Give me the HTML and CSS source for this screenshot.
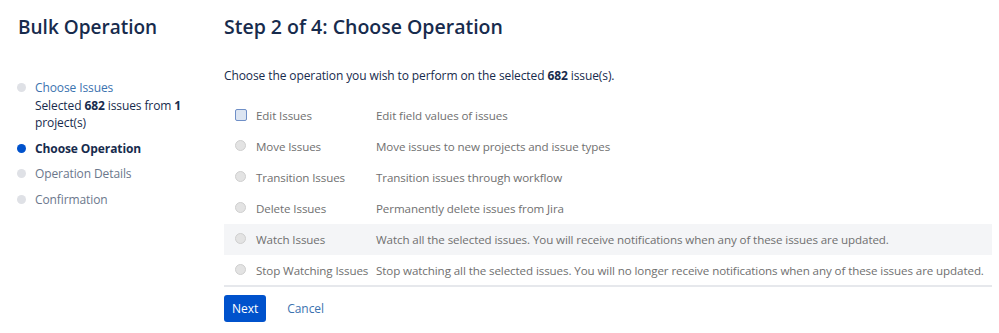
FILE: index.html
```html
<!DOCTYPE html>
<html lang="en">
<head>
    <meta charset="UTF-8">
    <title>Bulk Operation</title>
    <link rel="stylesheet" href="styles.css">
</head>
<body>

<div class="page">
    <div class="sidebar">
        <h1>Bulk Operation</h1>
        <ul class="steps">
            <li class="done">
                <span class="dot"></span>
                <div>
                    <a href="#">Choose Issues</a>
                    <div class="note">Selected <b>682</b> issues from <b>1</b> project(s)</div>
                </div>
            </li>
            <li class="current"><span class="dot"></span><div>Choose Operation</div></li>
            <li><span class="dot"></span><div>Operation Details</div></li>
            <li><span class="dot"></span><div>Confirmation</div></li>
        </ul>
    </div>

    <div class="main">
        <h2>Step 2 of 4: Choose Operation</h2>
        <p class="intro">Choose the operation you wish to perform on the selected <b>682</b> issue(s).</p>

        <table class="ops">
            <tr>
                <td class="radio"><span class="check"></span></td>
                <td class="label">Edit Issues</td>
                <td>Edit field values of issues</td>
            </tr>
            <tr>
                <td class="radio"><span class="circle"></span></td>
                <td class="label">Move Issues</td>
                <td>Move issues to new projects and issue types</td>
            </tr>
            <tr>
                <td class="radio"><span class="circle"></span></td>
                <td class="label">Transition Issues</td>
                <td>Transition issues through workflow</td>
            </tr>
            <tr>
                <td class="radio"><span class="circle"></span></td>
                <td class="label">Delete Issues</td>
                <td>Permanently delete issues from Jira</td>
            </tr>
            <tr class="hover">
                <td class="radio"><span class="circle"></span></td>
                <td class="label">Watch Issues</td>
                <td>Watch all the selected issues. You will receive notifications when any of these issues are updated.</td>
            </tr>
            <tr class="last">
                <td class="radio"><span class="circle"></span></td>
                <td class="label">Stop Watching Issues</td>
                <td>Stop watching all the selected issues. You will no longer receive notifications when any of these issues are updated.</td>
            </tr>
        </table>

        <div class="buttons">
            <button class="btn">Next</button>
            <a href="#" class="cancel">Cancel</a>
        </div>
    </div>
</div>

</body>
</html>
```

FILE: styles.css
```css
body {
    font-family: 'Open Sans', sans-serif;
    font-size: 12px;
    letter-spacing: -0.1px;
    margin: 0;
    color: #172b4d;
    background: #fff;
}

.page {
    display: flex;
}

.sidebar {
    width: 206px;
    flex-shrink: 0;
    padding-left: 18px;
}

h1, h2 {
    font-size: 19px;
    font-weight: 600;
    letter-spacing: 0;
    margin: 13px 0 0;
    line-height: 28px;
    color: #172b4d;
}
h2 {
    font-size: 19.5px;
}

.steps {
    list-style: none;
    margin: 38px 0 0;
    padding: 0;
}
.steps li {
    display: flex;
    line-height: 17.5px;
    margin-bottom: 8px;
    color: #6b778c;
}
.steps .dot {
    width: 9px;
    height: 9px;
    border-radius: 50%;
    background: #dfe1e6;
    margin: 4px 9px 0 -1px;
    flex-shrink: 0;
}
.steps a {
    color: #3b73af;
    text-decoration: none;
}
.steps .note {
    color: #172b4d;
    width: 150px;
}
.steps .current {
    color: #172b4d;
    font-weight: bold;
}
.steps .current .dot {
    background: #0052cc;
}

.main {
    flex: 1;
    min-width: 0;
    padding-right: 7px;
}

.intro {
    margin: 26px 0 16px;
}

.ops {
    width: 100%;
    border-collapse: collapse;
    table-layout: fixed;
    color: #707070;
    font-size: 11.6px;
}
.ops td {
    height: 31px;
    padding: 0;
    white-space: nowrap;
}
.ops .radio {
    width: 32px;
    padding-left: 11px;
    box-sizing: border-box;
}
.ops .label {
    width: 120px;
}
.ops .hover td {
    background: #f4f5f7;
}
.ops .last td {
    height: 30px;
    border-bottom: 2px solid #e6e8ec;
}

.circle {
    display: inline-block;
    width: 9px;
    height: 9px;
    border-radius: 50%;
    background: #e3e3e3;
    border: 1px solid #cfcfcf;
    vertical-align: middle;
    margin-top: -4px;
}
.check {
    display: inline-block;
    width: 10px;
    height: 10px;
    border-radius: 2px;
    background: #dce5f2;
    border: 1px solid #6f8fc7;
    vertical-align: middle;
    margin-top: -4px;
}

.buttons {
    margin-top: 8px;
    display: flex;
    align-items: center;
}
.btn {
    background: #0052cc;
    color: #fff;
    border: none;
    border-radius: 3px;
    font-family: inherit;
    font-size: 12px;
    height: 27px;
    padding: 0 8px;
}
.cancel {
    color: #3b73af;
    text-decoration: none;
    margin-left: 21px;
}
```
